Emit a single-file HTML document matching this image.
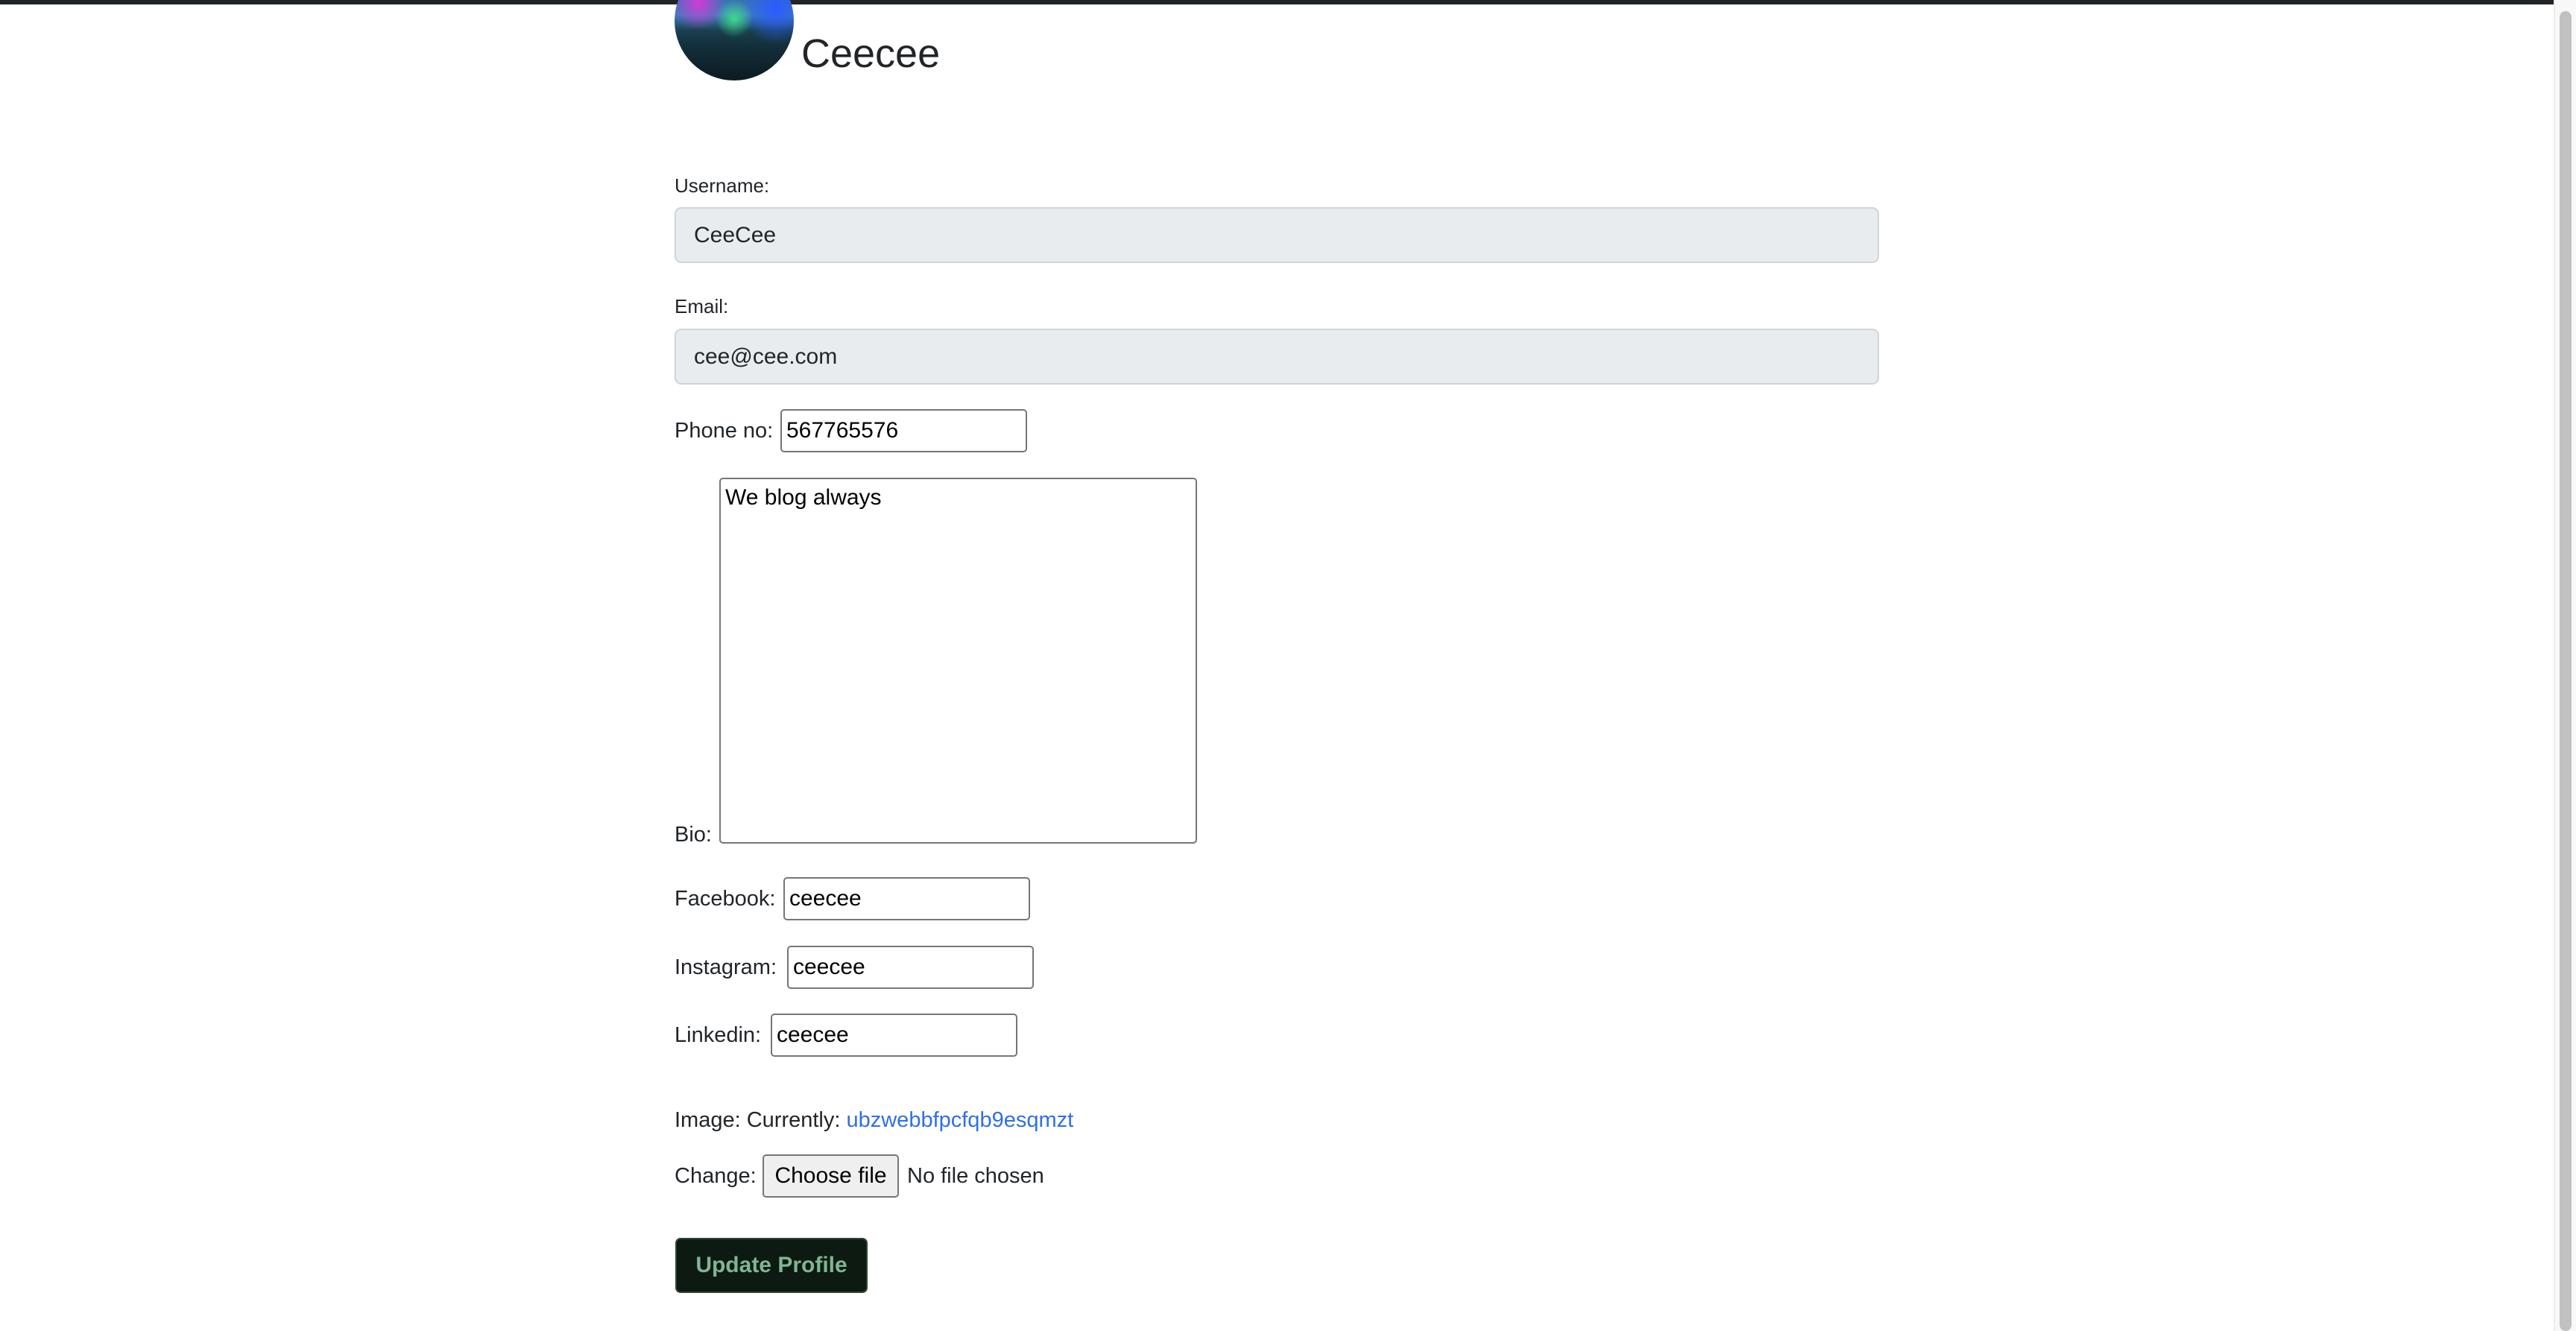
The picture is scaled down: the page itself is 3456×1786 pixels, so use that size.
<!DOCTYPE html>
<html><head><meta charset="utf-8"><style>
html,body{margin:0;padding:0;width:3456px;height:1786px;overflow:hidden;background:#fff;font-family:"Liberation Sans",sans-serif;color:#212529;}
.a{position:absolute;white-space:nowrap;}
.lbl{font-size:26px;line-height:40px;}
.txt{font-size:29px;line-height:40px;}
.inp{position:absolute;box-sizing:border-box;border:2px solid #767676;border-radius:5px;background:#fff;font-size:30px;color:#000;padding-left:6px;display:flex;align-items:center;}
.fc{position:absolute;box-sizing:border-box;background:#e9ecef;border:2px solid #ced4da;border-radius:9px;font-size:30px;padding-left:24px;display:flex;align-items:center;color:#212529;}
</style></head><body>
<div class="a" style="left:0;top:0;width:3426px;height:6px;background:#212529;"></div>
<div class="a" style="left:3426px;top:0;width:30px;height:1786px;background:#f8f8f8;border-left:2px solid #ececec;box-sizing:border-box;"></div>
<div class="a" style="left:3434px;top:15px;width:16px;height:1771px;background:#c1c1c1;border-radius:8px;"></div>

<div class="a" style="left:905px;top:-52px;width:160px;height:160px;border-radius:50%;overflow:hidden;background:
radial-gradient(circle at 20% 35%,#d23bd8 0,transparent 22%),
radial-gradient(circle at 50% 48%,#3fd88a 0,transparent 22%),
radial-gradient(circle at 85% 40%,#2a5bff 0,transparent 28%),
linear-gradient(#2a4a90 0%,#3d80c0 45%,#1a4050 58%,#13303c 70%,#0d1a22 100%);"></div>

<div class="a" style="left:1075px;top:28px;font-size:54px;line-height:88px;color:#212529;">Ceecee</div>

<div class="a lbl" style="left:905px;top:229px;">Username:</div>
<div class="fc" style="left:905px;top:278px;width:1616px;height:75px;">CeeCee</div>

<div class="a lbl" style="left:905px;top:391px;">Email:</div>
<div class="fc" style="left:905px;top:441px;width:1616px;height:75px;">cee@cee.com</div>

<div class="a txt" style="left:905px;top:558px;">Phone no:</div>
<div class="inp" style="left:1047px;top:549px;width:331px;height:58px;">567765576</div>

<div class="a txt" style="left:905px;top:1100px;">Bio:</div>
<div class="inp" style="left:965px;top:641px;width:641px;height:491px;align-items:flex-start;padding-top:8px;">We blog always</div>

<div class="a txt" style="left:905px;top:1186px;">Facebook:</div>
<div class="inp" style="left:1051px;top:1177px;width:331px;height:58px;">ceecee</div>

<div class="a txt" style="left:905px;top:1278px;">Instagram:</div>
<div class="inp" style="left:1056px;top:1269px;width:331px;height:58px;">ceecee</div>

<div class="a txt" style="left:905px;top:1369px;">Linkedin:</div>
<div class="inp" style="left:1034px;top:1360px;width:331px;height:58px;">ceecee</div>

<div class="a txt" style="left:905px;top:1483px;">Image: Currently: <span style="color:#2f6fe8;">ubzwebbfpcfqb9esqmzt</span></div>

<div class="a txt" style="left:905px;top:1558px;">Change:</div>
<div class="a" style="left:1023px;top:1549px;width:183px;height:58px;box-sizing:border-box;background:#efefef;border:2px solid #767676;border-radius:5px;font-size:30px;line-height:54px;text-align:center;color:#000;">Choose file</div>
<div class="a txt" style="left:1217px;top:1558px;">No file chosen</div>

<div class="a" style="left:906px;top:1661px;width:258px;height:74px;box-sizing:border-box;background:#0c1a12;border:2px solid #2a4a35;border-radius:7px;font-size:30px;font-weight:bold;line-height:70px;text-align:center;color:#7fb595;">Update Profile</div>
</body></html>
